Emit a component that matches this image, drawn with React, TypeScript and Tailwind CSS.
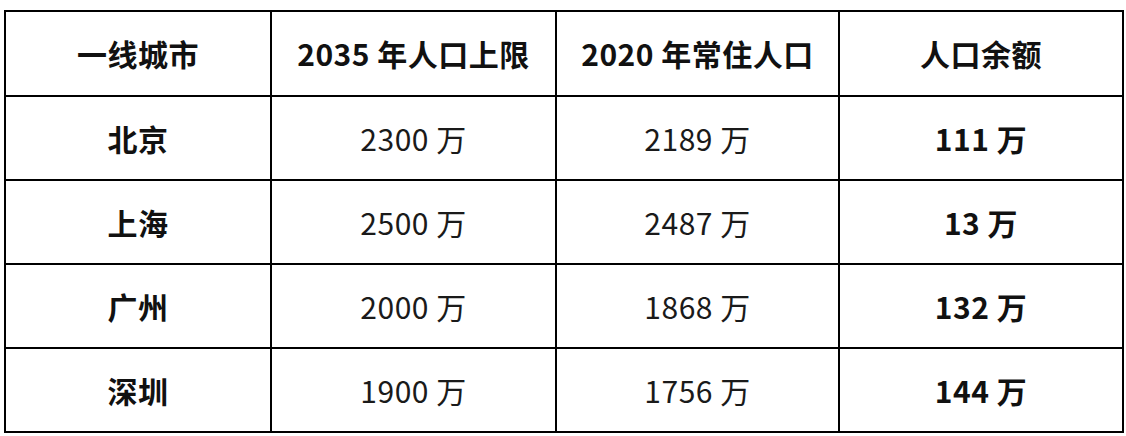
import React from "react";

const rows = [
  { city: "北京", limit: "2300 万", current: "2189 万", left: "111 万" },
  { city: "上海", limit: "2500 万", current: "2487 万", left: "13 万" },
  { city: "广州", limit: "2000 万", current: "1868 万", left: "132 万" },
  { city: "深圳", limit: "1900 万", current: "1756 万", left: "144 万" },
];

const font = { fontFamily: '"Noto Sans CJK SC", "Noto Sans", sans-serif' };

const App: React.FC = () => {
  return (
    <div className="w-[1126px] h-[436px] bg-white pt-[10px] pl-[4px]" style={font}>
      <table className="border-collapse table-fixed w-[1118px] text-[30px] tracking-[0.5px] text-[#111]">
        <colgroup>
          <col className="w-[266px]" />
          <col className="w-[285px]" />
          <col className="w-[283px]" />
          <col className="w-[284px]" />
        </colgroup>
        <thead>
          <tr className="h-[85px]">
            <th className="border-2 border-black font-semibold text-center">一线城市</th>
            <th className="border-2 border-black font-semibold text-center">2035 年人口上限</th>
            <th className="border-2 border-black font-semibold text-center">2020 年常住人口</th>
            <th className="border-2 border-black font-semibold text-center">人口余额</th>
          </tr>
        </thead>
        <tbody>
          {rows.map((r) => (
            <tr key={r.city} className="h-[84px]">
              <td className="border-2 border-black font-semibold text-center">{r.city}</td>
              <td className="border-2 border-black font-normal text-center text-[#1a1a1a]">{r.limit}</td>
              <td className="border-2 border-black font-normal text-center text-[#1a1a1a]">{r.current}</td>
              <td className="border-2 border-black font-semibold text-center">{r.left}</td>
            </tr>
          ))}
        </tbody>
      </table>
    </div>
  );
};

export default App;
